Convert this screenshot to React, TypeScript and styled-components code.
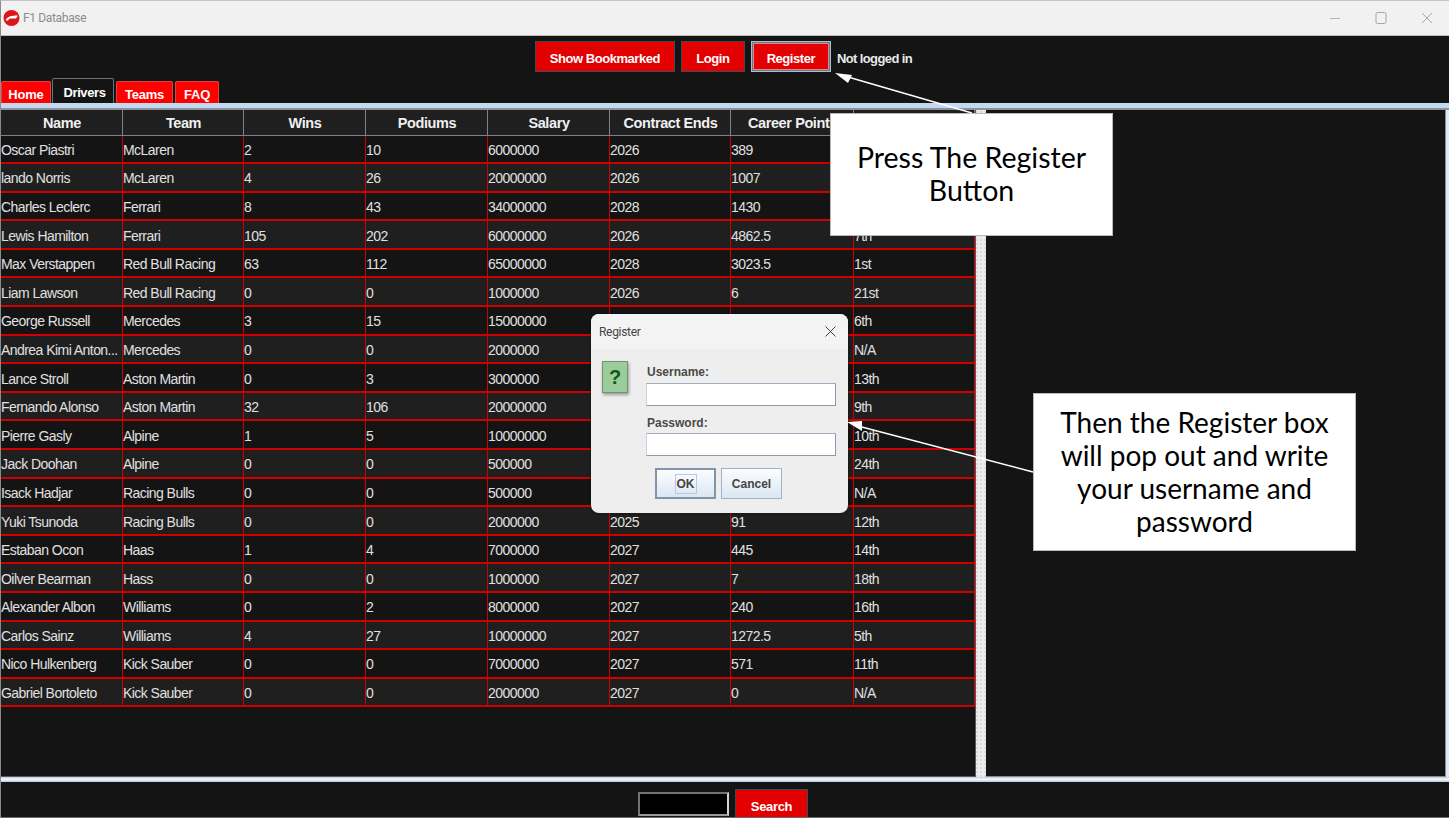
import React from "react";
import styled, { createGlobalStyle } from "styled-components";

const GlobalStyle = createGlobalStyle`
  html, body {
    margin: 0;
    padding: 0;
    background: #fff;
    overflow: hidden;
  }
  * {
    box-sizing: border-box;
  }
`;

const Page = styled.div`
  position: relative;
  width: 1449px;
  height: 820px;
  overflow: hidden;
  font-family: "Liberation Sans", Arial, sans-serif;
`;

const Frame = styled.div`
  display: flex;
  flex-direction: column;
  height: 818px;
  background: #141414;
  border-left: 1px solid #8a8a8a;
  border-top: 1px solid #c4c4c4;
  border-bottom: 1px solid #6a6a6a;
`;

const TitleBar = styled.div`
  height: 35px;
  flex: none;
  display: flex;
  align-items: center;
  justify-content: space-between;
  background: #f1f1f1;
  border-bottom: 1px solid #bdbdbd;
  padding: 0 15px 0 2px;
`;

const TitleLeft = styled.div`
  display: flex;
  align-items: center;
  gap: 3px;
  color: #8c8c8c;
  font-family: "Roboto", sans-serif;
  font-size: 12px;
  letter-spacing: -0.35px;
`;

const WindowControls = styled.div`
  display: flex;
  align-items: center;
  gap: 32px;
`;

const Toolbar = styled.div`
  height: 43px;
  flex: none;
  padding: 5px 3px 0 0;
  display: flex;
  justify-content: center;
  align-items: flex-start;
  gap: 6px;
`;

const RedButton = styled.div<{ $w: number; $focused?: boolean }>`
  width: ${(p) => p.$w}px;
  height: 31px;
  display: flex;
  align-items: center;
  justify-content: center;
  padding-top: 3px;
  background: #e20000;
  color: #fff;
  font-size: 13px;
  font-weight: 700;
  letter-spacing: -0.45px;
  border: 1px solid ${(p) => (p.$focused ? "#a9bdd6" : "#454a52")};
  box-shadow: ${(p) => (p.$focused ? "inset 0 0 0 1px #6c7687, inset 0 0 0 2px #d98a8a" : "none")};
`;

const Status = styled.div`
  height: 31px;
  display: flex;
  align-items: center;
  padding-top: 3px;
  color: #e8e8e8;
  font-size: 13px;
  font-weight: 700;
  letter-spacing: -0.6px;
`;

const TabStrip = styled.div`
  height: 24px;
  flex: none;
  display: flex;
  align-items: flex-end;
`;

const Tab = styled.div<{ $w: number; $gap: number; $active?: boolean }>`
  width: ${(p) => p.$w}px;
  height: ${(p) => (p.$active ? 25 : 22)}px;
  margin-right: ${(p) => p.$gap}px;
  display: flex;
  align-items: center;
  justify-content: center;
  color: #fff;
  font-size: 13px;
  font-weight: 700;
  letter-spacing: ${(p) => (p.$active ? -0.4 : -0.2)}px;
  padding: ${(p) => (p.$active ? "2px 0 0 3px" : "4px 0 0")};
  border-radius: 2px 2px 0 0;
  background: ${(p) => (p.$active ? "#141414" : "#ff0000")};
  border: ${(p) => (p.$active ? "1px solid #6d7178" : "1px solid #e54040")};
  border-bottom: none;
`;

const TabRule = styled.div`
  height: 7px;
  flex: none;
  background: #c3d9f0;
  border-bottom: 2px solid #8b929c;
`;

const Split = styled.div`
  flex: 1;
  min-height: 0;
  display: flex;
  padding-right: 3px;
  background: #dfe8f2;
`;

const TablePane = styled.div`
  width: 975px;
  flex: none;
  display: flex;
  flex-direction: column;
  background: #141414;
  border-right: 1px solid #55585e;
  border-bottom: 1px solid #55585e;
`;

const Divider = styled.div`
  width: 10px;
  flex: none;
  background-color: #ececec;
  background-image: radial-gradient(#c4c4c4 0.6px, transparent 0.8px);
  background-size: 4px 4px;
  background-position: 3px 0;
`;

const SidePane = styled.div`
  flex: 1;
  background: #141414;
  border-right: 1px solid #8a8a8a;
  border-bottom: 1px solid #8a8a8a;
`;

const columns = "122px 121px 122px 122px 122px 121px 123px 121px";

const HeaderRow = styled.div`
  display: grid;
  grid-template-columns: ${columns};
  height: 25.5px;
`;

const HeaderCell = styled.div`
  display: flex;
  align-items: center;
  justify-content: center;
  padding: 2px 0 0 1px;
  background: #1f1f1f;
  color: #f0f0f0;
  font-size: 14.5px;
  font-weight: 700;
  letter-spacing: -0.4px;
  border-right: 1px solid #7d8289;
  border-bottom: 1px solid #7d8289;
`;

const Row = styled.div<{ $alt: boolean }>`
  display: grid;
  grid-template-columns: ${columns};
  height: 28.6px;
  background: ${(p) => (p.$alt ? "#1f1f1f" : "#141414")};
  border-bottom: 2px solid #d00000;
`;

const Cell = styled.div`
  display: flex;
  align-items: center;
  padding-top: 2px;
  color: #e0e0e0;
  font-size: 14px;
  letter-spacing: -0.55px;
  white-space: nowrap;
  overflow: hidden;
  border-right: 1px solid #d00000;
`;

const StatusBar = styled.div`
  height: 40px;
  flex: none;
  display: flex;
  flex-direction: column;
`;

const BottomRule = styled.div`
  height: 5px;
  flex: none;
  background: linear-gradient(#bcd0e6, #f6f9fd 45%, #b5cbe3);
`;

const SearchRow = styled.div`
  flex: 1;
  display: flex;
  justify-content: center;
  gap: 6px;
  padding-top: 7px;
  padding-right: 4px;
  overflow: hidden;
`;

const SearchInput = styled.div`
  width: 91px;
  height: 24px;
  margin-top: 3px;
  background: #000;
  border: 2px solid #6f747b;
  border-right-color: #d4d4d4;
  border-bottom-color: #9a9a9a;
`;

const SearchButton = styled.div`
  width: 73px;
  height: 36px;
  flex: none;
  display: flex;
  align-items: center;
  justify-content: center;
  padding-bottom: 2px;
  background: #e20000;
  border: 1px solid #454a52;
  color: #fff;
  font-size: 13px;
  font-weight: 700;
  letter-spacing: -0.35px;
`;

const Callout = styled.div<{ $x: number; $y: number; $w: number; $h: number; $size: number }>`
  position: absolute;
  left: ${(p) => p.$x}px;
  top: ${(p) => p.$y}px;
  width: ${(p) => p.$w}px;
  height: ${(p) => p.$h}px;
  display: flex;
  align-items: center;
  justify-content: center;
  text-align: center;
  background: #fff;
  border: 1px solid #b9b9b9;
  color: #000;
  font-family: "Lato", sans-serif;
  font-size: ${(p) => p.$size}px;
  line-height: 33px;
  padding: 0 20px 1px;
`;

const Arrows = styled.svg`
  position: absolute;
  inset: 0;
  pointer-events: none;
`;

const Dialog = styled.div`
  position: absolute;
  left: 591px;
  top: 314px;
  width: 257px;
  height: 199px;
  display: flex;
  flex-direction: column;
  border-radius: 8px;
  overflow: hidden;
  background: #eeeeee;
  box-shadow: 0 0 3px rgba(0, 0, 0, 0.5);
`;

const DialogTitle = styled.div`
  height: 35px;
  flex: none;
  display: flex;
  align-items: center;
  justify-content: space-between;
  padding: 0 11px 0 8px;
  background: #f3f3f3;
  color: #444;
  font-family: "Roboto", sans-serif;
  font-size: 12px;
  letter-spacing: -0.3px;
`;

const DialogBody = styled.div`
  flex: 1;
  display: flex;
  padding: 12px 12px 0 11px;
`;

const QuestionIcon = styled.div`
  width: 26px;
  height: 32px;
  flex: none;
  display: flex;
  align-items: center;
  justify-content: center;
  background: #9ccb9c;
  border: 1px solid #6d946d;
  box-shadow: 1px 2px 3px rgba(0, 0, 0, 0.35);
  color: #0f5a0f;
  font-size: 20px;
  font-weight: 700;
`;

const Form = styled.div`
  margin-left: 18px;
  flex: 1;
  display: flex;
  flex-direction: column;
`;

const FieldLabel = styled.div<{ $first?: boolean }>`
  margin-left: 1px;
  height: 14px;
  margin-top: ${(p) => (p.$first ? 4 : 10)}px;
  margin-bottom: ${(p) => (p.$first ? 4 : 3)}px;
  display: flex;
  align-items: center;
  color: #4a4a4a;
  font-size: 12px;
  font-weight: 700;
`;

const FieldInput = styled.div`
  height: 23px;
  background: #fff;
  border: 1px solid #8c9bab;
  border-top-color: #9fb0c2;
  border-left-color: #c7d2de;
`;

const DialogButtons = styled.div`
  display: flex;
  gap: 5px;
  margin: 12px 0 0 9px;
`;

const DialogButton = styled.div<{ $default?: boolean }>`
  width: 61px;
  height: 31px;
  display: flex;
  align-items: center;
  justify-content: center;
  background: linear-gradient(#fbfdff, #dbe7f3);
  border: ${(p) => (p.$default ? "2px solid #7f95ab" : "1px solid #9fb4c8")};
  color: #444;
  font-size: 12px;
  font-weight: 700;
`;

const OkFocus = styled.span`
  padding: 2px 1px;
  border: 1px solid #b7cbe0;
`;

const headers = ["Name", "Team", "Wins", "Podiums", "Salary", "Contract Ends", "Career Points", "Standing"];

const drivers: string[][] = [
  ["Oscar Piastri", "McLaren", "2", "10", "6000000", "2026", "389", "3rd"],
  ["lando Norris", "McLaren", "4", "26", "20000000", "2026", "1007", "2nd"],
  ["Charles Leclerc", "Ferrari", "8", "43", "34000000", "2028", "1430", "8th"],
  ["Lewis Hamilton", "Ferrari", "105", "202", "60000000", "2026", "4862.5", "7th"],
  ["Max Verstappen", "Red Bull Racing", "63", "112", "65000000", "2028", "3023.5", "1st"],
  ["Liam Lawson", "Red Bull Racing", "0", "0", "1000000", "2026", "6", "21st"],
  ["George Russell", "Mercedes", "3", "15", "15000000", "2025", "1000", "6th"],
  ["Andrea Kimi Anton...", "Mercedes", "0", "0", "2000000", "2029", "0", "N/A"],
  ["Lance Stroll", "Aston Martin", "0", "3", "3000000", "2026", "300", "13th"],
  ["Fernando Alonso", "Aston Martin", "32", "106", "20000000", "2026", "2300", "9th"],
  ["Pierre Gasly", "Alpine", "1", "5", "10000000", "2026", "430", "10th"],
  ["Jack Doohan", "Alpine", "0", "0", "500000", "2026", "0", "24th"],
  ["Isack Hadjar", "Racing Bulls", "0", "0", "500000", "2026", "0", "N/A"],
  ["Yuki Tsunoda", "Racing Bulls", "0", "0", "2000000", "2025", "91", "12th"],
  ["Estaban Ocon", "Haas", "1", "4", "7000000", "2027", "445", "14th"],
  ["Oilver Bearman", "Hass", "0", "0", "1000000", "2027", "7", "18th"],
  ["Alexander Albon", "Williams", "0", "2", "8000000", "2027", "240", "16th"],
  ["Carlos Sainz", "Williams", "4", "27", "10000000", "2027", "1272.5", "5th"],
  ["Nico Hulkenberg", "Kick Sauber", "0", "0", "7000000", "2027", "571", "11th"],
  ["Gabriel Bortoleto", "Kick Sauber", "0", "0", "2000000", "2027", "0", "N/A"],
];

const AppLogo = () => (
  <svg width="17" height="20" viewBox="0 0 17 20">
    <circle cx="8.5" cy="10" r="8" fill="#d8161b" />
    <path d="M2.5 12.5 C4 8.5 8 7.5 15 7.5 L13 10.5 L6.5 10.5 L5 12.5 Z" fill="#fff" />
  </svg>
);

const WindowIcons = () => (
  <WindowControls>
    <svg width="14" height="14" viewBox="0 0 14 14">
      <path d="M2 7.5 H12" stroke="#b5b5b5" strokeWidth="1" />
    </svg>
    <svg width="14" height="14" viewBox="0 0 14 14">
      <rect x="2" y="1.5" width="10" height="11" rx="1.5" fill="none" stroke="#a5a5a5" strokeWidth="1" />
    </svg>
    <svg width="14" height="14" viewBox="0 0 14 14">
      <path d="M2 2 L12 12 M12 2 L2 12" stroke="#a5a5a5" strokeWidth="1" />
    </svg>
  </WindowControls>
);

const App = () => (
  <Page>
    <GlobalStyle />
    <Frame>
      <TitleBar>
        <TitleLeft>
          <AppLogo />
          F1 Database
        </TitleLeft>
        <WindowIcons />
      </TitleBar>
      <Toolbar>
        <RedButton $w={140}>Show Bookmarked</RedButton>
        <RedButton $w={64}>Login</RedButton>
        <RedButton $w={80} $focused>Register</RedButton>
        <Status>Not logged in</Status>
      </Toolbar>
      <TabStrip>
        <Tab $w={50} $gap={1}>Home</Tab>
        <Tab $w={62} $gap={2} $active>Drivers</Tab>
        <Tab $w={57} $gap={2}>Teams</Tab>
        <Tab $w={44} $gap={0}>FAQ</Tab>
      </TabStrip>
      <TabRule />
      <Split>
        <TablePane>
          <HeaderRow>
            {headers.map((h) => (
              <HeaderCell key={h}>{h}</HeaderCell>
            ))}
          </HeaderRow>
          {drivers.map((driver, i) => (
            <Row key={driver[0]} $alt={i % 2 === 1}>
              {driver.map((value, j) => (
                <Cell key={j}>{value}</Cell>
              ))}
            </Row>
          ))}
        </TablePane>
        <Divider />
        <SidePane />
      </Split>
      <StatusBar>
        <BottomRule />
        <SearchRow>
          <SearchInput />
          <SearchButton>Search</SearchButton>
        </SearchRow>
      </StatusBar>
    </Frame>

    <Callout $x={830} $y={113} $w={283} $h={123} $size={28.5}>Press The Register Button</Callout>
    <Callout $x={1033} $y={393} $w={323} $h={158} $size={28}>Then the Register box will pop out and write your username and password</Callout>

    <Dialog>
      <DialogTitle>
        Register
        <svg width="13" height="13" viewBox="0 0 13 13">
          <path d="M1.5 1.5 L11.5 11.5 M11.5 1.5 L1.5 11.5" stroke="#444" strokeWidth="1" />
        </svg>
      </DialogTitle>
      <DialogBody>
        <QuestionIcon>?</QuestionIcon>
        <Form>
          <FieldLabel $first>Username:</FieldLabel>
          <FieldInput />
          <FieldLabel>Password:</FieldLabel>
          <FieldInput />
          <DialogButtons>
            <DialogButton $default><OkFocus>OK</OkFocus></DialogButton>
            <DialogButton>Cancel</DialogButton>
          </DialogButtons>
        </Form>
      </DialogBody>
    </Dialog>

    <Arrows width="1449" height="820">
      <path d="M972 113 L848 77" stroke="#fff" strokeWidth="1.5" />
      <path d="M835 73 L852 75 L848 83 Z" fill="#fff" />
      <path d="M1033 472 L858 426" stroke="#fff" strokeWidth="1.5" />
      <path d="M847 422 L862 421 L862 431 Z" fill="#fff" />
    </Arrows>
  </Page>
);

export default App;
